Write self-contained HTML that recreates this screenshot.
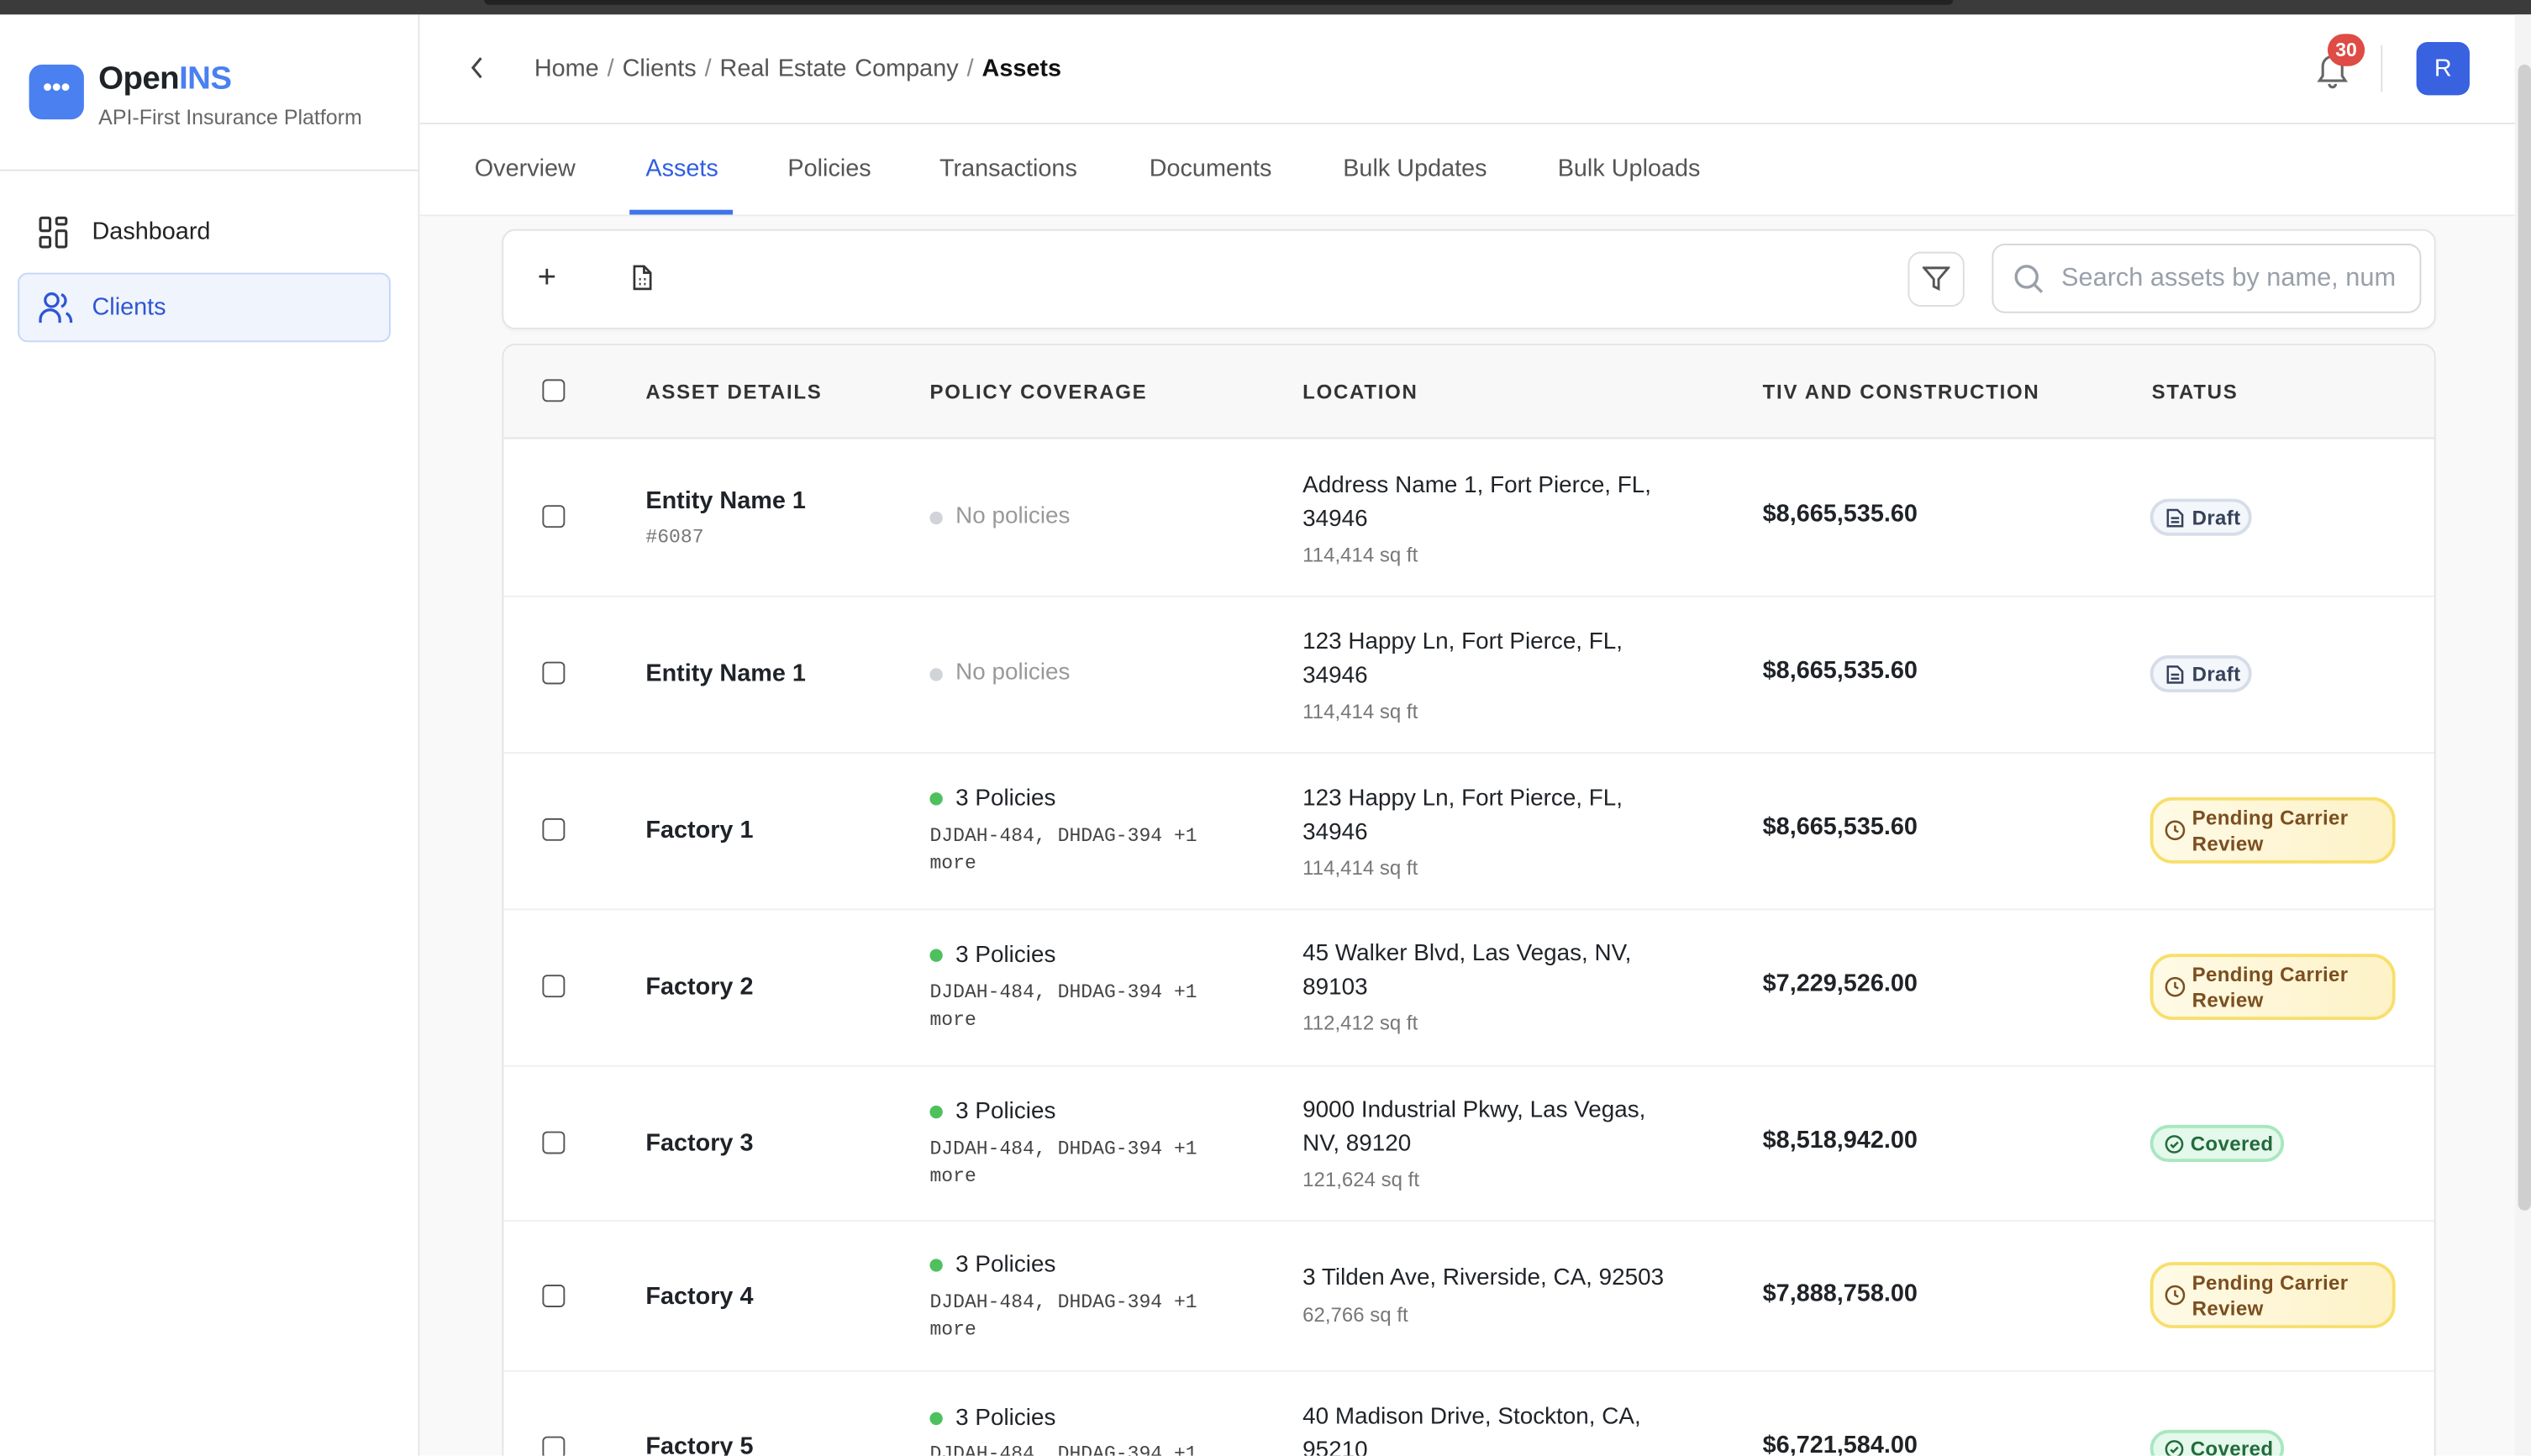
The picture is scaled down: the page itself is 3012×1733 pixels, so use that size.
<!DOCTYPE html>
<html><head><meta charset="utf-8"><style>
*{box-sizing:border-box;margin:0;padding:0}
html,body{width:3012px;height:1732px;overflow:hidden;background:#fff}
#w{position:absolute;left:0;top:0;width:1568px;height:902px;transform:scale(1.92092);transform-origin:0 0;font-family:"Liberation Sans",sans-serif;color:#1f2328;overflow:hidden;background:#fff}
.a{position:absolute;white-space:nowrap}
.cb{position:absolute;width:14px;height:14px;border:1.5px solid #555;border-radius:3px;background:#fff}
.b{font-weight:bold}
.mono{font-family:"Liberation Mono",monospace}
.pill{position:absolute;border-radius:14px;font-weight:bold;font-size:12.5px;display:flex;align-items:center;letter-spacing:.2px}
.draft{height:23px;width:63px;background:#f3f6fa;border:2px solid #d6dde8;color:#36415a;padding-left:8px}
.pend{height:41px;width:152px;background:linear-gradient(90deg,#fefae6,#fdf2c7);border:2px solid #f8df6c;color:#7c4e1f;padding-left:7px;line-height:16px;white-space:normal}
.cov{height:23px;width:83px;background:#e4f8eb;border:2px solid #a8e7c0;color:#236b3c;padding-left:7px}
.hd{font-size:12.5px;letter-spacing:.9px;color:#333;font-weight:bold}
</style></head><body><div id="w">
<div class="a" style="left:0;top:0;width:1568px;height:9px;background:#3b3b3b"></div>
<div class="a" style="left:300px;top:0;width:910px;height:3px;background:#222;border-radius:0 0 6px 6px"></div>
<!-- sidebar -->
<div class="a" style="left:259px;top:9px;width:1px;height:893px;background:#e6e6e6"></div>
<div class="a" style="left:18px;top:40px;width:34px;height:34px;border-radius:8px;background:#4a80f0;color:#fff;font-size:16px;font-weight:bold;text-align:center;line-height:30px">•••</div>
<div class="a b" style="left:61px;top:38px;font-size:20px;letter-spacing:-.3px">Open<span style="color:#4a80f0">INS</span></div>
<div class="a" style="left:61px;top:65px;font-size:13px;color:#666">API-First Insurance Platform</div>
<div class="a" style="left:0;top:105px;width:259px;height:1px;background:#e4e4e4"></div>
<svg class="a" style="left:24px;top:134px" width="18" height="20" viewBox="0 0 18 20" fill="none" stroke="#333" stroke-width="1.6"><rect x="1" y="1" width="6" height="8" rx="1"/><rect x="11" y="1" width="6" height="4" rx="1"/><rect x="1" y="13" width="6" height="6" rx="1"/><rect x="11" y="9" width="6" height="10" rx="1"/></svg>
<div class="a" style="left:57px;top:135px;font-size:15px;color:#222">Dashboard</div>
<div class="a" style="left:11px;top:169px;width:231px;height:43px;background:#eff4fd;border:1.5px solid #c3d7f7;border-radius:6px"></div>
<svg class="a" style="left:24px;top:181px" width="22" height="20" viewBox="0 0 22 20" fill="none" stroke="#2f55d4" stroke-width="1.7"><circle cx="8" cy="5" r="4"/><path d="M1 19v-2a6 6 0 0 1 12 0v2"/><path d="M14 1.5a4 4 0 0 1 0 7.5M17 13a6 6 0 0 1 3 5v1"/></svg>
<div class="a" style="left:57px;top:182px;font-size:15px;color:#2f55d4">Clients</div>
<!-- header -->
<div class="a" style="left:260px;top:76px;width:1300px;height:1px;background:#e6e6e6"></div>
<svg class="a" style="left:290px;top:35px" width="12" height="14" viewBox="0 0 12 14" fill="none" stroke="#444" stroke-width="1.6"><path d="M8 1L3 7l5 6"/></svg>
<div class="a" style="left:331px;top:34px;font-size:15px;color:#555;word-spacing:1px">Home <span style="color:#888">/</span> Clients <span style="color:#888">/</span> Real Estate Company <span style="color:#888">/</span> <b style="color:#111">Assets</b></div>
<svg class="a" style="left:1434px;top:31px" width="22" height="24" viewBox="0 0 22 24" fill="none" stroke="#666" stroke-width="1.6"><path d="M5 16V10a6 6 0 0 1 12 0v6l2 3H3z"/><path d="M9 21a2 2 0 0 0 4 0"/></svg>
<div class="a" style="left:1442px;top:21px;width:23px;height:20px;border-radius:10px;background:#df4b45;color:#fff;font-size:12px;font-weight:bold;text-align:center;line-height:20px">30</div>
<div class="a" style="left:1475px;top:28px;width:1px;height:29px;background:#e0e0e0"></div>
<div class="a" style="left:1497px;top:26px;width:33px;height:33px;border-radius:7px;background:#3962e1;color:#fff;font-size:15px;text-align:center;line-height:33px">R</div>
<!-- tabs -->
<div class="a" style="left:260px;top:133px;width:1300px;height:1px;background:#ececec"></div>
<div class="a" style="left:294px;top:96px;font-size:15px;color:#555">Overview</div>
<div class="a" style="left:400px;top:96px;font-size:15px;color:#2f5ee0">Assets</div>
<div class="a" style="left:390px;top:130px;width:64px;height:3px;background:#3f75ea"></div>
<div class="a" style="left:488px;top:96px;font-size:15px;color:#555">Policies</div>
<div class="a" style="left:582px;top:96px;font-size:15px;color:#555">Transactions</div>
<div class="a" style="left:712px;top:96px;font-size:15px;color:#555">Documents</div>
<div class="a" style="left:832px;top:96px;font-size:15px;color:#555">Bulk Updates</div>
<div class="a" style="left:965px;top:96px;font-size:15px;color:#555">Bulk Uploads</div>
<!-- main -->
<div class="a" style="left:260px;top:134px;width:1298px;height:768px;background:#f9f9f9"></div>
<div class="a" style="left:1558px;top:9px;width:10px;height:893px;background:#f4f4f4"></div>
<div class="a" style="left:1560px;top:40px;width:8px;height:710px;border-radius:4px;background:#cfcfcf"></div>
<div class="a" style="left:311px;top:142px;width:1198px;height:62px;background:#fff;border:1px solid #e4e4e4;border-radius:8px;box-shadow:0 1px 2px rgba(0,0,0,.04)"></div>
<div class="a" style="left:333px;top:161px;font-size:20px;color:#333;font-weight:300">+</div>
<svg class="a" style="left:391px;top:164px" width="14" height="17" viewBox="0 0 14 17" fill="none" stroke="#333" stroke-width="1.4"><path d="M2 1h6l4 4v10H2z"/><path d="M8 1v4h4"/><path d="M5 9h1M8 9h1M5 12h1M8 12h1"/></svg>
<div class="a" style="left:1182px;top:156px;width:35px;height:34px;border:1px solid #ddd;border-radius:8px;background:#fff"></div>
<svg class="a" style="left:1191px;top:165px" width="17" height="16" viewBox="0 0 17 16" fill="none" stroke="#555" stroke-width="1.5"><path d="M1 1h15l-6 7v6l-3-1.5V8z"/></svg>
<div class="a" style="left:1234px;top:151px;width:266px;height:43px;border:1.5px solid #d6d8dd;border-radius:8px;background:#fff;overflow:hidden"><div class="a" style="left:42px;top:12px;width:207px;overflow:hidden;font-size:16px;color:#9aa0aa">Search assets by name, number</div></div>
<svg class="a" style="left:1247px;top:163px" width="20" height="20" viewBox="0 0 20 20" fill="none" stroke="#9aa0aa" stroke-width="1.8"><circle cx="8.5" cy="8.5" r="6.5"/><path d="M13.5 13.5L18 18"/></svg>
<!-- table -->
<div class="a" style="left:311px;top:213px;width:1198px;height:700px;background:#fff;border:1px solid #e4e4e4;border-radius:8px;overflow:hidden">
<div class="a" style="left:0;top:0;width:1198px;height:58px;background:#f8f8f8;border-bottom:1.5px solid #e3e3e3"></div>
</div>
<div class="cb" style="left:336px;top:235px"></div>
<div class="a hd" style="left:400px;top:236px">ASSET DETAILS</div>
<div class="a hd" style="left:576px;top:236px">POLICY COVERAGE</div>
<div class="a hd" style="left:807px;top:236px">LOCATION</div>
<div class="a hd" style="left:1092px;top:236px">TIV AND CONSTRUCTION</div>
<div class="a hd" style="left:1333px;top:236px">STATUS</div>

<!-- rows -->
<div class="a" style="left:312px;top:369px;width:1196px;height:1px;background:#efefef"></div>
<div class="a" style="left:312px;top:466px;width:1196px;height:1px;background:#efefef"></div>
<div class="a" style="left:312px;top:563px;width:1196px;height:1px;background:#efefef"></div>
<div class="a" style="left:312px;top:660px;width:1196px;height:1px;background:#efefef"></div>
<div class="a" style="left:312px;top:756px;width:1196px;height:1px;background:#efefef"></div>
<div class="a" style="left:312px;top:849px;width:1196px;height:1px;background:#efefef"></div>

<!-- row1 -->
<div class="cb" style="left:336px;top:313px"></div>
<div class="a b" style="left:400px;top:302px;font-size:15px">Entity Name 1</div>
<div class="a mono" style="left:400px;top:326px;font-size:12px;color:#777">#6087</div>
<div class="a" style="left:576px;top:317px;width:8px;height:8px;border-radius:4px;background:#d0d3d8"></div>
<div class="a" style="left:592px;top:312px;font-size:14.5px;color:#999">No policies</div>
<div class="a" style="left:807px;top:291px;font-size:14.5px;line-height:21px">Address Name 1, Fort Pierce, FL,<br>34946</div>
<div class="a" style="left:807px;top:337px;font-size:12.5px;color:#777">114,414 sq ft</div>
<div class="a b" style="left:1092px;top:310px;font-size:15px">$8,665,535.60</div>
<div class="pill draft" style="left:1332px;top:309px"><svg width="11" height="12" viewBox="0 0 11 12" fill="none" stroke="#36415a" stroke-width="1.3"><path d="M1 1h6l3 3v7H1z"/><path d="M3 6h5M3 8.5h5"/></svg><span style="margin-left:5px">Draft</span></div>

<!-- row2 -->
<div class="cb" style="left:336px;top:410px"></div>
<div class="a b" style="left:400px;top:409px;font-size:15px">Entity Name 1</div>
<div class="a" style="left:576px;top:414px;width:8px;height:8px;border-radius:4px;background:#d0d3d8"></div>
<div class="a" style="left:592px;top:409px;font-size:14.5px;color:#999">No policies</div>
<div class="a" style="left:807px;top:388px;font-size:14.5px;line-height:21px">123 Happy Ln, Fort Pierce, FL,<br>34946</div>
<div class="a" style="left:807px;top:434px;font-size:12.5px;color:#777">114,414 sq ft</div>
<div class="a b" style="left:1092px;top:407px;font-size:15px">$8,665,535.60</div>
<div class="pill draft" style="left:1332px;top:406px"><svg width="11" height="12" viewBox="0 0 11 12" fill="none" stroke="#36415a" stroke-width="1.3"><path d="M1 1h6l3 3v7H1z"/><path d="M3 6h5M3 8.5h5"/></svg><span style="margin-left:5px">Draft</span></div>

<!-- row3 -->
<div class="cb" style="left:336px;top:507px"></div>
<div class="a b" style="left:400px;top:506px;font-size:15px">Factory 1</div>
<div class="a" style="left:576px;top:491px;width:8px;height:8px;border-radius:4px;background:#4fc05e"></div>
<div class="a" style="left:592px;top:487px;font-size:14.5px">3 Policies</div>
<div class="a mono" style="left:576px;top:510px;font-size:12px;color:#444;line-height:17px">DJDAH-484, DHDAG-394 +1<br>more</div>
<div class="a" style="left:807px;top:485px;font-size:14.5px;line-height:21px">123 Happy Ln, Fort Pierce, FL,<br>34946</div>
<div class="a" style="left:807px;top:531px;font-size:12.5px;color:#777">114,414 sq ft</div>
<div class="a b" style="left:1092px;top:504px;font-size:15px">$8,665,535.60</div>
<div class="pill pend" style="left:1332px;top:494px"><svg width="13" height="13" viewBox="0 0 13 13" fill="none" stroke="#7c4e1f" stroke-width="1.3" style="flex:none"><circle cx="6.5" cy="6.5" r="5.5"/><path d="M6.5 3.5v3l2 1"/></svg><span style="margin-left:4px">Pending Carrier<br>Review</span></div>

<!-- row4 -->
<div class="cb" style="left:336px;top:604px"></div>
<div class="a b" style="left:400px;top:603px;font-size:15px">Factory 2</div>
<div class="a" style="left:576px;top:588px;width:8px;height:8px;border-radius:4px;background:#4fc05e"></div>
<div class="a" style="left:592px;top:584px;font-size:14.5px">3 Policies</div>
<div class="a mono" style="left:576px;top:607px;font-size:12px;color:#444;line-height:17px">DJDAH-484, DHDAG-394 +1<br>more</div>
<div class="a" style="left:807px;top:581px;font-size:14.5px;line-height:21px">45 Walker Blvd, Las Vegas, NV,<br>89103</div>
<div class="a" style="left:807px;top:627px;font-size:12.5px;color:#777">112,412 sq ft</div>
<div class="a b" style="left:1092px;top:601px;font-size:15px">$7,229,526.00</div>
<div class="pill pend" style="left:1332px;top:591px"><svg width="13" height="13" viewBox="0 0 13 13" fill="none" stroke="#7c4e1f" stroke-width="1.3" style="flex:none"><circle cx="6.5" cy="6.5" r="5.5"/><path d="M6.5 3.5v3l2 1"/></svg><span style="margin-left:4px">Pending Carrier<br>Review</span></div>

<!-- row5 -->
<div class="cb" style="left:336px;top:701px"></div>
<div class="a b" style="left:400px;top:700px;font-size:15px">Factory 3</div>
<div class="a" style="left:576px;top:685px;width:8px;height:8px;border-radius:4px;background:#4fc05e"></div>
<div class="a" style="left:592px;top:681px;font-size:14.5px">3 Policies</div>
<div class="a mono" style="left:576px;top:704px;font-size:12px;color:#444;line-height:17px">DJDAH-484, DHDAG-394 +1<br>more</div>
<div class="a" style="left:807px;top:678px;font-size:14.5px;line-height:21px">9000 Industrial Pkwy, Las Vegas,<br>NV, 89120</div>
<div class="a" style="left:807px;top:724px;font-size:12.5px;color:#777">121,624 sq ft</div>
<div class="a b" style="left:1092px;top:698px;font-size:15px">$8,518,942.00</div>
<div class="pill cov" style="left:1332px;top:697px"><svg width="12" height="12" viewBox="0 0 12 12" fill="none" stroke="#236b3c" stroke-width="1.3"><circle cx="6" cy="6" r="5"/><path d="M3.8 6.2l1.5 1.5 3-3"/></svg><span style="margin-left:4px">Covered</span></div>

<!-- row6 -->
<div class="cb" style="left:336px;top:796px"></div>
<div class="a b" style="left:400px;top:795px;font-size:15px">Factory 4</div>
<div class="a" style="left:576px;top:780px;width:8px;height:8px;border-radius:4px;background:#4fc05e"></div>
<div class="a" style="left:592px;top:776px;font-size:14.5px">3 Policies</div>
<div class="a mono" style="left:576px;top:799px;font-size:12px;color:#444;line-height:17px">DJDAH-484, DHDAG-394 +1<br>more</div>
<div class="a" style="left:807px;top:784px;font-size:14.5px">3 Tilden Ave, Riverside, CA, 92503</div>
<div class="a" style="left:807px;top:808px;font-size:12.5px;color:#777">62,766 sq ft</div>
<div class="a b" style="left:1092px;top:793px;font-size:15px">$7,888,758.00</div>
<div class="pill pend" style="left:1332px;top:782px"><svg width="13" height="13" viewBox="0 0 13 13" fill="none" stroke="#7c4e1f" stroke-width="1.3" style="flex:none"><circle cx="6.5" cy="6.5" r="5.5"/><path d="M6.5 3.5v3l2 1"/></svg><span style="margin-left:4px">Pending Carrier<br>Review</span></div>

<!-- row7 -->
<div class="cb" style="left:336px;top:890px"></div>
<div class="a b" style="left:400px;top:888px;font-size:15px">Factory 5</div>
<div class="a" style="left:576px;top:875px;width:8px;height:8px;border-radius:4px;background:#4fc05e"></div>
<div class="a" style="left:592px;top:871px;font-size:14.5px">3 Policies</div>
<div class="a mono" style="left:576px;top:894px;font-size:12px;color:#444">DJDAH-484, DHDAG-394 +1</div>
<div class="a" style="left:807px;top:868px;font-size:14.5px;line-height:21px">40 Madison Drive, Stockton, CA,<br>95210</div>
<div class="a b" style="left:1092px;top:887px;font-size:15px">$6,721,584.00</div>
<div class="pill cov" style="left:1332px;top:886px"><svg width="12" height="12" viewBox="0 0 12 12" fill="none" stroke="#236b3c" stroke-width="1.3"><circle cx="6" cy="6" r="5"/><path d="M3.8 6.2l1.5 1.5 3-3"/></svg><span style="margin-left:4px">Covered</span></div>
</div></body></html>
